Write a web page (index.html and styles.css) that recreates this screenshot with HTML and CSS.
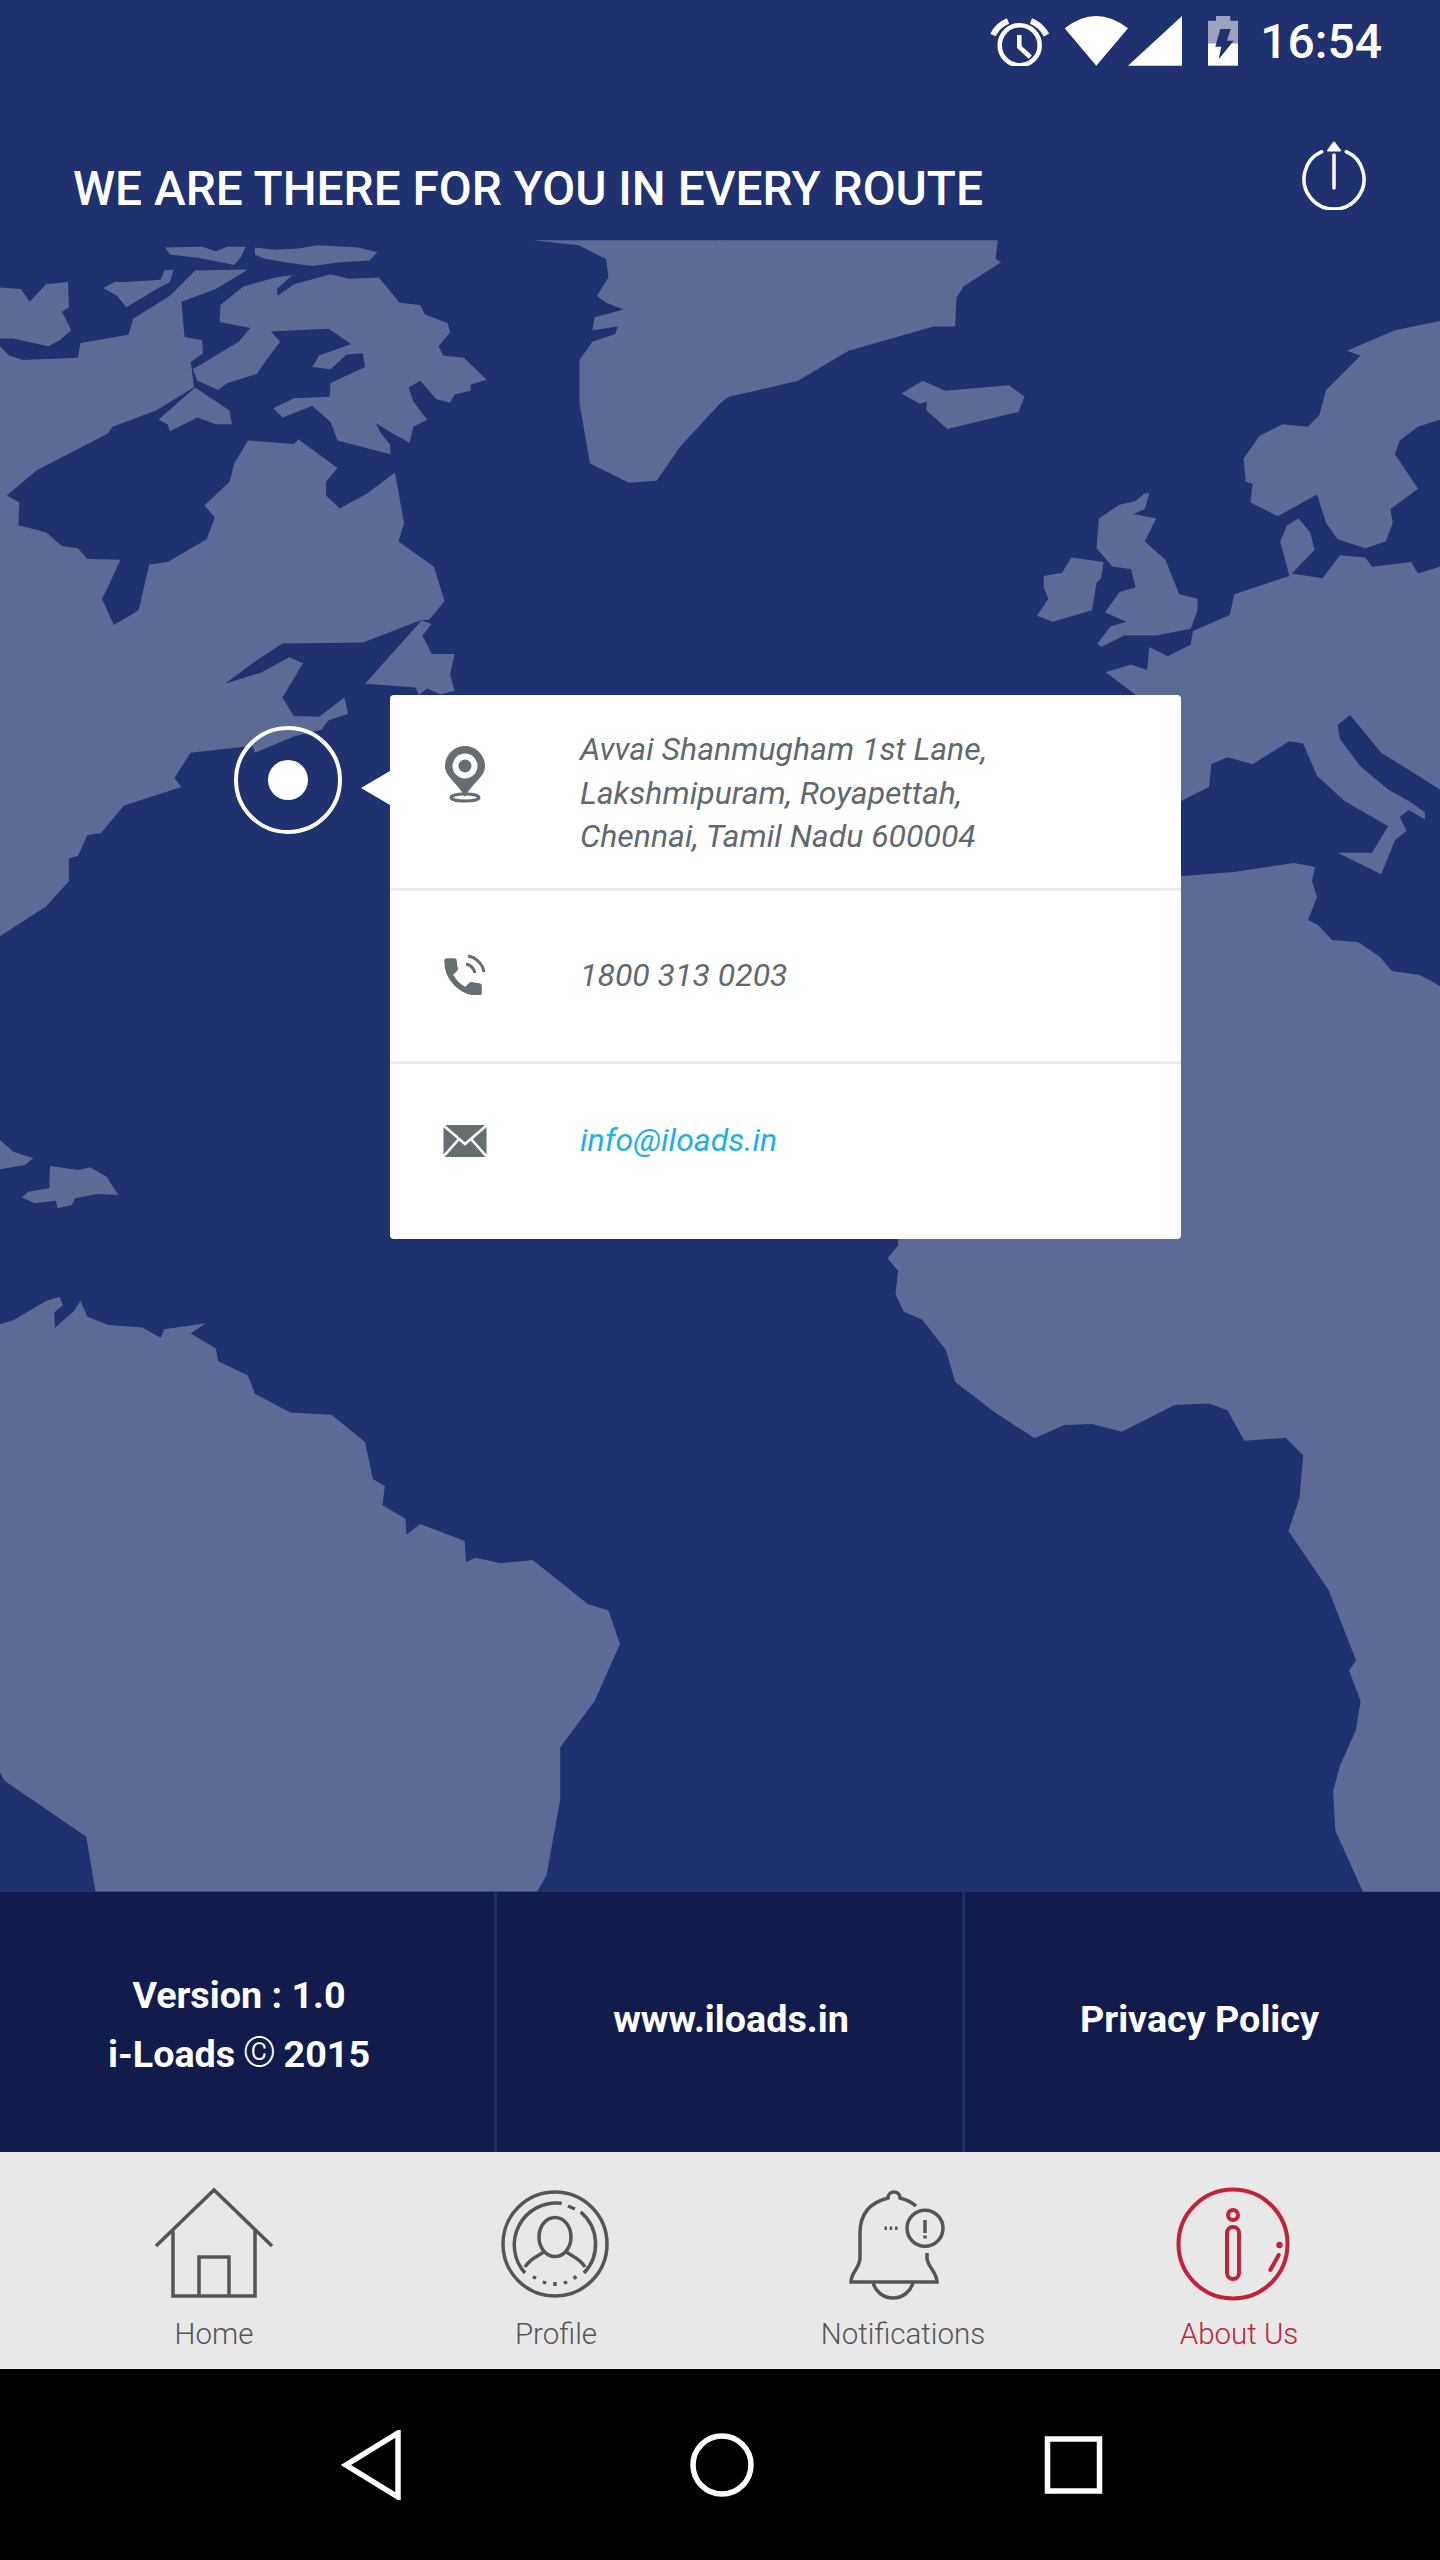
FILE: index.html
```html
<!DOCTYPE html>
<html lang="en">
<head>
    <meta charset="UTF-8">
    <meta name="viewport" content="width=device-width, initial-scale=1.0">
    <title>About Us</title>
    <link rel="stylesheet" href="styles.css">
</head>
<body>
    <div class="screen">
        <div class="status-bar">
            <svg class="st-alarm" width="64" height="50" viewBox="0 0 64 50">
                <circle cx="31.7" cy="29.3" r="20"/>
                <path d="M31.3 19V31L42.3 41"/>
                <path class="st-bell" d="M5 19Q10 9 20 5M43 5Q53 9 58.5 19"/>
            </svg>
            <svg class="st-net" width="118" height="50" viewBox="0 0 118 50">
                <path d="M.7 12.3Q32-12.3 64 12.3L32.3 49.7Z"/>
                <path d="M64 49.7 118 0V49.7Z"/>
            </svg>
            <svg class="st-battery" width="30" height="50" viewBox="0 0 30 50">
                <path class="st-empty" d="M8 0H22.3V4.7H30V27.3H0V4.7H8Z"/>
                <rect y="27.3" width="30" height="22.4"/>
                <path class="st-bolt" d="M12.3 13H22.7L19 24.7H25.7L10.7 43.3 13.3 30.7H7.3Z"/>
            </svg>
            <span class="st-time">16:54</span>
        </div>

        <header class="top-head">
            <h1>WE ARE THERE FOR YOU IN EVERY ROUTE</h1>
            <svg class="power" width="66" height="70" viewBox="0 0 66 70">
                <path d="M20.7 11.7A30 30 0 1 0 45.3 11.7M33 15V48"/>
                <path class="power-tip" d="M33 2.5 39 10.5H27Z"/>
            </svg>
        </header>

        <main class="map">
            <svg class="map-art" width="1440" height="1652" viewBox="0 240 1440 1652">
                <g transform="translate(0 220) scale(.4592)">
                    <polygon points="360,60 440,58 470,68 495,58 535,58 525,80 510,98 470,90 430,82 370,75"/>
                    <polygon points="555,60 600,65 650,62 690,55 780,60 822,70 805,88 740,92 680,100 620,92 575,84 555,75"/>
                    <polygon points="0,147 45,150 65,178 100,140 148,135 150,190 135,200 155,240 130,262 105,275 60,265 30,258 0,258"/>
                    <polygon points="225,148 250,135 275,135 350,130 358,110 378,108 370,135 345,148 275,190 255,165"/>
                    <polygon points="480,185 530,145 600,125 637,120 603,150 605,165 640,140 720,118 760,128 825,125 870,180 915,185 925,205 975,225 980,245 955,275 965,295 1010,300 1060,348 1025,358 1025,372 990,380 980,398 950,390 915,350 890,365 900,395 930,435 900,450 892,485 855,465 818,442 830,465 850,490 850,510 735,480 720,440 680,405 615,430 595,410 640,388 718,385 720,355 795,320 790,290 755,293 720,325 680,320 695,295 765,270 715,237 590,243 610,265 580,305 560,335 495,355 475,370 430,350 420,325 470,295 520,265 545,235 478,222"/>
                    <polygon points="345,435 425,365 500,415 505,445 470,445 430,430 370,460 365,445"/>
                    <polygon points="0,275 20,295 50,305 170,300 175,268 280,250 290,215 370,165 425,110 540,108 470,150 395,178 402,255 440,262 442,290 415,310 418,328 422,365 340,415 245,450 235,465 80,545 15,600 42,615 40,665 100,680 135,710 170,715 190,738 262,740 235,800 222,825 248,882 302,850 325,750 365,745 450,695 468,648 445,622 500,570 510,530 540,480 640,488 650,478 735,540 710,570 710,600 740,628 800,595 860,550 880,660 868,700 945,755 968,830 935,870 915,872 790,920 615,922 560,958 490,1010 570,985 630,952 660,965 615,1040 640,1080 695,1082 750,1040 758,1075 715,1090 700,1110 640,1125 555,1160 550,1145 415,1160 380,1215 395,1235 270,1275 220,1335 190,1340 170,1385 150,1390 150,1440 100,1495 0,1560"/>
                    <polygon points="918,872 795,1010 905,1018 912,1035 930,1020 960,1033 990,1025 980,990 990,945 940,945 920,905 940,880"/>
                    <polygon points="1160,44 1260,55 1320,85 1325,125 1300,165 1320,180 1358,195 1295,212 1290,240 1345,232 1340,248 1290,265 1262,305 1262,400 1285,530 1370,572 1430,568 1480,495 1575,392 1575,44"/>
                </g>
                <g transform="translate(720 220) scale(.4592)">
                    <polygon points="-5,44 605,44 600,85 612,92 530,145 515,170 512,232 465,232 280,285 170,350 20,385 -5,402"/>
                    <polygon points="395,378 442,350 490,372 630,360 663,385 650,418 495,455 450,415 450,395 435,400"/>
                    <polygon points="705,775 745,768 765,735 835,745 830,780 820,790 810,850 725,875 690,862 715,825 705,800"/>
                    <polygon points="935,595 925,630 900,640 950,650 925,700 970,740 1000,815 1040,825 1040,850 1025,890 950,905 880,905 830,930 822,922 850,885 885,875 838,855 870,810 905,800 895,760 855,755 820,715 825,650 870,620 905,612 925,595"/>
                    <polygon points="1568,220 1470,240 1365,285 1395,295 1320,370 1305,425 1280,450 1225,445 1175,470 1140,520 1145,570 1160,575 1155,615 1215,645 1300,598 1320,660 1345,695 1405,715 1450,700 1465,660 1460,630 1520,585 1470,510 1480,480 1520,450 1568,435"/>
                    <polygon points="840,985 895,968 930,980 935,930 975,950 1025,925 1030,895 1110,860 1120,815 1240,775 1220,700 1235,665 1260,650 1285,680 1295,718 1245,770 1312,780 1350,730 1405,735 1420,755 1505,745 1520,770 1568,755 1568,1240 1440,1160 1372,1078 1345,1100 1350,1130 1395,1190 1455,1240 1500,1265 1535,1290 1535,1305 1500,1285 1480,1300 1495,1330 1470,1350 1440,1425 1345,1378 1420,1378 1455,1320 1360,1265 1300,1210 1270,1140 1240,1135 1160,1185 1105,1170 1070,1185 1065,1235 1004,1265 900,1290 905,1034"/>
                </g>
                <polygon points="1170,877 1234,872 1294,863 1315,867 1312,881 1317,897 1308,920 1318,925 1332,940 1358,942 1380,957 1392,971 1420,975 1440,986 1440,1110 1170,1110"/>
                <g transform="translate(720 1100) scale(.4592 .5102)">
                    <polygon points="388,0 388,285 365,310 388,335 382,380 400,415 440,430 492,490 512,552 595,610 685,663 750,637 810,635 875,650 990,598 1065,595 1105,608 1142,668 1232,662 1270,697 1262,780 1238,845 1325,960 1385,1098 1370,1118 1395,1178 1385,1235 1350,1305 1335,1355 1340,1432 1400,1552 1568,1552 1568,0"/>
                </g>
                <g transform="translate(0 920) scale(.3333)">
                    <polygon points="0,660 40,695 100,715 75,735 0,748"/>
                    <polygon points="150,738 235,750 270,742 320,770 355,825 290,822 225,835 215,855 172,865 168,842 105,850 65,832 85,815 148,805"/>
                </g>
                <g transform="translate(0 1240) scale(.4592 .4209)">
                    <polygon points="0,200 30,190 100,145 130,135 137,155 118,172 122,262 100,235 118,210 160,170 175,145 190,182 235,202 310,208 350,232 358,212 448,198 415,222 470,258 475,288 540,322 555,365 632,410 722,415 795,480 812,568 838,585 833,630 883,662 885,700 915,675 1012,715 1015,765 1035,755 1090,768 1160,760 1280,865 1325,880 1350,960 1295,1095 1220,1205 1220,1330 1190,1510 1170,1548 208,1548 188,1418 10,1285 0,1265"/>
                </g>
            </svg>

            <div class="route-pin"><span class="route-dot"></span></div>

            <section class="contact-card">
                <div class="card-row row-address">
                    <svg class="row-icon" width="44" height="57" viewBox="0 0 44 57">
                        <path class="ic-fill" d="M22 0C11 0 2 9 2 20 2 31 14 36 22 51 30 36 42 31 42 20 42 9 33 0 22 0Z"/>
                        <circle cx="22" cy="20" r="12.5" fill="#fff"/>
                        <circle class="ic-fill" cx="22" cy="20" r="6.5"/>
                        <ellipse class="ic-ring" cx="22" cy="51.5" rx="14" ry="3.6"/>
                    </svg>
                    <p>Avvai Shanmugham 1st Lane,<br>Lakshmipuram, Royapettah,<br>Chennai, Tamil Nadu 600004</p>
                </div>
                <div class="card-row row-phone">
                    <svg class="row-icon" width="44" height="41" viewBox="0 0 44 41">
                        <path class="ic-fat" transform="translate(-4 -1) scale(2)" d="M6.62 10.79c1.44 2.83 3.76 5.14 6.59 6.59l2.2-2.2c.27-.27.67-.36 1.02-.24 1.12.37 2.33.57 3.57.57.55 0 1 .45 1 1V20c0 .55-.45 1-1 1-9.39 0-17-7.61-17-17 0-.55.45-1 1-1h3.5c.55 0 1 .45 1 1 0 1.25.2 2.45.57 3.57.11.35.03.74-.25 1.02l-2.2 2.2z"/>
                        <path class="ic-ring" d="M23 10A12 12 0 0 1 32 19M25 2A20 20 0 0 1 41 18"/>
                    </svg>
                    <p>1800 313 0203</p>
                </div>
                <div class="card-row row-mail">
                    <svg class="row-icon" width="44" height="32" viewBox="0 0 44 32">
                        <rect class="ic-fill" x=".5" width="43" height="32"/>
                        <path class="ic-cut" d="M0 0 22 19 44 0M0 32 16 14M44 32 28 14"/>
                    </svg>
                    <p class="mail-link">info@iloads.in</p>
                </div>
            </section>
        </main>

        <div class="info-bar">
            <div class="info-cell cell-version">
                <div>Version : 1.0<br>i-Loads <span class="copy">©</span> 2015</div>
            </div>
            <div class="info-cell cell-site">www.iloads.in</div>
            <div class="info-cell cell-policy">Privacy Policy</div>
        </div>

        <nav class="tab-bar">
            <div class="tab">
                <svg class="tab-icon" width="120" height="116" viewBox="0 -2 120 116">
                    <path d="M2 58 60 2 118 58M19 41V108H101V41M45 108V69H75V108"/>
                </svg>
                <span>Home</span>
            </div>
            <div class="tab tab-profile">
                <svg class="tab-icon" width="116" height="116" viewBox="-2 -2 116 116">
                    <circle cx="56" cy="56" r="52"/>
                    <path d="M26 85A42 42 0 0 1 62.7 15.3M69 18 76 21M81.7 24A42 42 0 0 1 85 85"/>
                    <ellipse cx="56" cy="49" rx="16" ry="19.5"/>
                    <path d="M26 79C31 70 40 68 46 63M66 63C72 68 81 70 86 79"/>
                    <path d="M36 88 35 91M46 93 45 96M56 94V98M66 93 67 96M75 88 77 91"/>
                </svg>
                <span>Profile</span>
            </div>
            <div class="tab tab-notify">
                <svg class="tab-icon" width="100" height="116" viewBox="0 -2 100 116">
                    <path d="M68 18C62 13 56 11 52 10 52 2 40 2 40 10 24 14 12 24 12 45V70C12 80 3 84 3 94H89C89 84 79 78 79 70V65"/>
                    <path d="M25 94C27 104 36 110 45 110 54 110 63 104 65 94"/>
                    <circle cx="77" cy="40.3" r="18"/>
                    <path d="M77 32V45M77 47.5V50.5M36.5 40.3H39M41.7 40.3H44.2M47 40.3H49.5"/>
                </svg>
                <span>Notifications</span>
            </div>
            <div class="tab tab-about active">
                <svg class="tab-icon" width="116" height="116" viewBox="0 0 116 116">
                    <circle cx="58" cy="58" r="54.5"/>
                    <circle cx="58" cy="29" r="5"/>
                    <rect x="52" y="41" width="12" height="52" rx="6"/>
                    <path d="M103.7 69 95.3 84"/>
                    <circle class="tab-dot" cx="104.5" cy="59" r="1.2"/>
                </svg>
                <span>About Us</span>
            </div>
        </nav>

        <div class="system-nav">
            <svg width="70" height="70" viewBox="0 0 70 70"><path d="M63 3V67L11 35Z"/></svg>
            <svg width="70" height="70" viewBox="0 0 70 70"><circle cx="35" cy="35" r="29"/></svg>
            <svg width="70" height="70" viewBox="0 0 70 70"><rect x="8.5" y="9" width="52" height="52"/></svg>
        </div>
    </div>
</body>
</html>
```

FILE: styles.css
```css
* {
    box-sizing: border-box;
}

body {
    margin: 0;
    font-family: Roboto, "Liberation Sans", sans-serif;
    background-color: #203170;
}

.screen {
    width: 1440px;
    height: 2560px;
    display: flex;
    flex-direction: column;
    overflow: hidden;
}

/* status bar */
.status-bar {
    height: 80px;
    padding: 16px 58px 0 0;
    display: flex;
    justify-content: flex-end;
    align-items: flex-start;
    color: #fff;
}

.status-bar svg {
    display: block;
    fill: #fff;
}

.st-alarm circle,
.st-alarm path {
    fill: none;
    stroke: #fff;
    stroke-width: 4.5;
}

.st-alarm .st-bell {
    stroke-width: 6;
}

.st-net {
    margin-left: 12px;
}

.st-battery {
    margin-left: 26px;
}

.st-empty {
    opacity: .55;
}

.status-bar .st-bolt {
    fill: #203170;
}

.st-time {
    margin-left: 22px;
    font-size: 48px;
    font-weight: 500;
    line-height: 52px;
}

/* header */
.top-head {
    height: 160px;
    padding: 60px 73px 0 73px;
    display: flex;
    justify-content: space-between;
    align-items: flex-start;
}

.top-head h1 {
    margin: 20px 0 0 0;
    color: #fff;
    font-size: 47.8px;
    font-weight: 500;
    line-height: 58px;
}

.power path {
    fill: none;
    stroke: #fff;
    stroke-width: 3.5;
    stroke-linecap: round;
}

.power .power-tip {
    fill: #fff;
    stroke-width: 2;
    stroke-linejoin: round;
}

/* map */
.map {
    position: relative;
    height: 1652px;
}

.map-art {
    position: absolute;
    left: 0;
    top: 0;
    fill: #5c6a95;
}

.route-pin {
    position: absolute;
    left: 234px;
    top: 486px;
    width: 108px;
    height: 108px;
    border: 4px solid #fff;
    border-radius: 50%;
    display: flex;
    justify-content: center;
    align-items: center;
}

.route-dot {
    width: 40px;
    height: 40px;
    border-radius: 50%;
    background-color: #fff;
}

.contact-card {
    position: absolute;
    left: 390px;
    top: 455px;
    width: 791px;
    background-color: #fff;
    border-radius: 4px;
}

.contact-card::before {
    content: "";
    position: absolute;
    left: -29px;
    top: 76px;
    border-top: 17px solid transparent;
    border-bottom: 17px solid transparent;
    border-right: 29px solid #fff;
}

.card-row {
    padding-left: 53px;
    display: flex;
    align-items: center;
    border-bottom: 3px solid #eeeeee;
}

.card-row p {
    margin: 0;
    font-size: 32px;
    font-style: italic;
    font-weight: 400;
    line-height: 43.5px;
    color: #62696e;
}

.row-icon {
    flex: none;
    margin-right: 93px;
}

.row-address {
    height: 196px;
    padding-top: 33px;
    align-items: flex-start;
}

.row-address .row-icon {
    margin-top: 18px;
}

.row-phone {
    height: 173px;
}

.row-phone .row-icon {
    margin-bottom: 4px;
}

.row-mail {
    height: 175px;
    padding-bottom: 22px;
    border-bottom: none;
}

.card-row .mail-link {
    color: #1eaee8;
}

.ic-fill {
    fill: #666e72;
}

.ic-fat {
    fill: #666e72;
    stroke: #666e72;
    stroke-width: .8;
}

.ic-ring {
    fill: none;
    stroke: #666e72;
    stroke-width: 3;
}

.ic-cut {
    fill: none;
    stroke: #fff;
    stroke-width: 2.5;
}

/* version row */
.info-bar {
    height: 260px;
    display: flex;
    background-color: #111c4c;
    color: #fff;
    font-size: 37.7px;
    font-weight: 700;
    line-height: 59px;
    text-align: center;
}

.info-cell {
    display: flex;
    justify-content: center;
    align-items: center;
}

.cell-version {
    width: 497px;
    padding: 6px 16px 0 0;
    border-right: 3.5px solid #1f2d66;
}

.cell-site {
    width: 468px;
    padding: 0 0 6px 3px;
    border-right: 3.5px solid #1f2d66;
}

.cell-policy {
    flex: 1;
    padding: 0 6px 6px 0;
}

.copy {
    margin: 0 -2px;
    font-size: 42px;
    font-weight: 300;
    line-height: 1;
}

/* bottom tabs */
.tab-bar {
    height: 217px;
    padding: 34px 0 0 43px;
    display: grid;
    grid-template-columns: 342px 342px 352px 320px;
    background-color: #e8e8e8;
}

.tab {
    display: flex;
    flex-direction: column;
    align-items: center;
    color: #555;
    font-size: 29.5px;
    font-weight: 300;
    line-height: 40px;
}

.tab span {
    margin-top: 12px;
}

.tab-icon {
    display: block;
    fill: none;
    stroke: #555;
    stroke-width: 3.5;
}

.tab-profile .tab-icon {
    margin-right: 3px;
}

.tab-notify .tab-icon {
    margin-right: 10px;
}

.tab-about .tab-icon {
    margin-right: 12px;
    stroke-width: 4;
    stroke-linecap: round;
}

.tab.active {
    color: #c1223b;
}

.tab.active .tab-icon {
    stroke: #c1223b;
}

.tab.active .tab-dot {
    fill: #c1223b;
}

/* android nav */
.system-nav {
    flex: 1;
    padding-left: 4px;
    display: flex;
    justify-content: center;
    align-items: center;
    gap: 282px;
    background-color: #000;
}

.system-nav svg {
    fill: none;
    stroke: #fff;
    stroke-width: 5.5;
}
```
